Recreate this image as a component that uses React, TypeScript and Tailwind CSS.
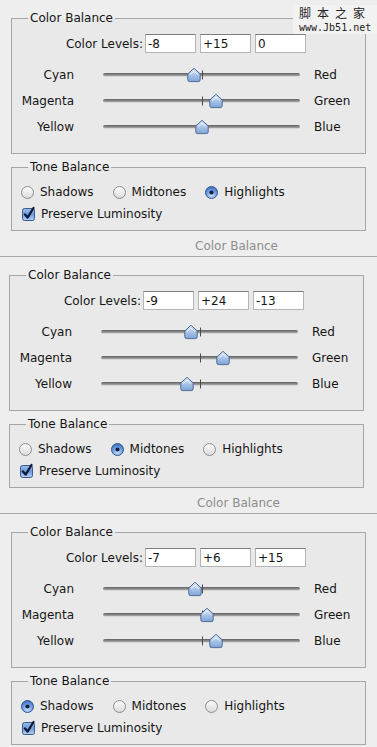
import React, { useId } from 'react';

type Tone = 'Shadows' | 'Midtones' | 'Highlights';

interface PanelProps {
  levels: [number, number, number];
  tone: Tone;
  shift?: boolean;
  footer?: boolean;
}

const fmt = (v: number) => (v > 0 ? `+${v}` : `${v}`);

const Thumb: React.FC<{ value: number }> = ({ value }) => {
  const id = useId();
  return (
    <svg
      width="14"
      height="15"
      viewBox="0 0 14 15"
      className="absolute top-1/2 -translate-y-1/2"
      style={{ left: `calc(${((value + 100) / 200) * 100}% - 7px)` }}
    >
      <defs>
        <linearGradient id={id} x1="0" y1="0" x2="0" y2="1">
          <stop offset="0" stopColor="#e4eefa" />
          <stop offset="0.5" stopColor="#a9c4e9" />
          <stop offset="1" stopColor="#7fa3d6" />
        </linearGradient>
      </defs>
      <path
        d="M7 0.8 L13.2 6.4 V12.2 Q13.2 14.2 11.2 14.2 H2.8 Q0.8 14.2 0.8 12.2 V6.4 Z"
        fill={`url(#${id})`}
        stroke="#4f6891"
        strokeWidth="1"
      />
      <path d="M3.2 7.2 L7 3.7 L10.8 7.2" fill="none" stroke="#ffffff" strokeOpacity="0.7" strokeWidth="1" />
    </svg>
  );
};

const Slider: React.FC<{ left: string; right: string; value: number }> = ({ left, right, value }) => (
  <div className="flex h-[26px] items-center">
    <span className="w-[62px] text-right">{left}</span>
    <div className="relative ml-[29px] flex h-[26px] w-[197px] items-center">
      <div className="h-[4px] w-full rounded-full border-b border-[#d6d6d6] bg-linear-to-b from-[#5f5f5f] to-[#a9a9a9]" />
      <div className="absolute left-1/2 top-1/2 h-[9px] w-px -translate-y-1/2 bg-[#4a4a4a]" />
      <Thumb value={value} />
    </div>
    <span className="ml-[14px]">{right}</span>
  </div>
);

const Radio: React.FC<{ on: boolean }> = ({ on }) => {
  const id = useId();
  return (
    <svg width="13" height="13" viewBox="0 0 13 13">
      <defs>
        {on ? (
          <radialGradient id={id} cx="0.5" cy="0.75" r="0.7">
            <stop offset="0" stopColor="#c9defa" />
            <stop offset="0.6" stopColor="#6f9be0" />
            <stop offset="1" stopColor="#3f6fbf" />
          </radialGradient>
        ) : (
          <linearGradient id={id} x1="0" y1="0" x2="0" y2="1">
            <stop offset="0" stopColor="#fdfdfd" />
            <stop offset="1" stopColor="#d9d9d9" />
          </linearGradient>
        )}
      </defs>
      <circle cx="6.5" cy="6.5" r="6" fill={`url(#${id})`} stroke={on ? '#34578f' : '#8c8c8c'} strokeWidth="1" />
      {on && <circle cx="6.5" cy="6.5" r="2.1" fill="#13213f" />}
    </svg>
  );
};

const Checkbox: React.FC = () => {
  const id = useId();
  return (
    <svg width="14" height="14" viewBox="0 0 14 14" className="overflow-visible">
      <defs>
        <linearGradient id={id} x1="0" y1="0" x2="0" y2="1">
          <stop offset="0" stopColor="#9cbcea" />
          <stop offset="0.5" stopColor="#6f9adc" />
          <stop offset="1" stopColor="#b7d0f2" />
        </linearGradient>
      </defs>
      <rect x="0.5" y="1.5" width="12" height="12" rx="2" fill={`url(#${id})`} stroke="#3b5a8d" />
      <path d="M3 7.5 L5.6 10.6 L11.5 1" fill="none" stroke="#0e1b3b" strokeWidth="2.3" strokeLinecap="round" strokeLinejoin="round" />
    </svg>
  );
};

const Panel: React.FC<PanelProps> = ({ levels, tone, shift = false, footer = false }) => {
  const ml = shift ? 'ml-[9px]' : 'ml-[11px]';
  const tones: Tone[] = ['Shadows', 'Midtones', 'Highlights'];
  return (
    <div className={footer ? 'flex h-[257px] flex-col' : 'flex flex-col'}>
      <fieldset className={`${ml} mt-[10px] w-[355px] border border-[#a6a6a6] bg-[#e9e9e9] pb-[13px]`}>
        <legend className="ml-[16px] px-[2px] leading-[16px]">Color Balance</legend>
        <div className="mt-[8px] flex items-center">
          <span className="w-[133px] pr-[2px] text-right">Color Levels:</span>
          <div className="flex gap-[4px]">
            {levels.map((v, i) => (
              <div
                key={i}
                className="flex h-[19px] w-[51px] items-center border border-[#b4b4b4] border-t-[#7d7d7d] bg-white pl-[2px]"
              >
                {fmt(v)}
              </div>
            ))}
          </div>
        </div>
        <div className="mt-[9px]">
          <Slider left="Cyan" right="Red" value={levels[0]} />
          <Slider left="Magenta" right="Green" value={levels[1]} />
          <Slider left="Yellow" right="Blue" value={levels[2]} />
        </div>
      </fieldset>

      <fieldset className={`${ml} mt-[5px] w-[355px] border border-[#a6a6a6] bg-[#e9e9e9] pb-[7px]`}>
        <legend className="ml-[16px] px-[2px] leading-[16px]">Tone Balance</legend>
        <div className="ml-[9px] mt-[8px] flex h-[18px] items-center gap-[19px]">
          {tones.map((t) => (
            <div key={t} className="flex items-center gap-[6px]">
              <Radio on={t === tone} />
              <span>{t}</span>
            </div>
          ))}
        </div>
        <div className="ml-[10px] mt-[4px] flex h-[18px] items-center gap-[5px]">
          <Checkbox />
          <span>Preserve Luminosity</span>
        </div>
      </fieldset>

      {footer && (
        <div className="mt-auto">
          <div className={`leading-[16px] text-[#8d8d8d] ${shift ? 'ml-[197px]' : 'ml-[195px]'}`}>Color Balance</div>
          <div className="mt-[2px] h-px bg-[#a9a9a9]" />
        </div>
      )}
    </div>
  );
};

export default function App() {
  return (
    <div className="relative h-[747px] w-[377px] overflow-hidden bg-[#eeeeee] font-['DejaVu_Sans',sans-serif] text-[12px] text-[#151515]">
      <div className="absolute left-[10px] top-[-12px] text-[13px] leading-[16px] text-[#c8c8c8]">Color Balance</div>

      <Panel levels={[-8, 15, 0]} tone="Highlights" footer />
      <Panel levels={[-9, 24, -13]} tone="Midtones" shift footer />
      <Panel levels={[-7, 6, 15]} tone="Shadows" />

      <div className="absolute left-[293px] top-[5px] flex h-[29px] w-[84px] flex-col items-start bg-[#f2f2f2] pl-[6px]">
        <span className="font-['Noto_Sans_CJK_SC',sans-serif] text-[12px] leading-[16px] tracking-[6px] text-[#222]">脚本之家</span>
        <span className="font-['DejaVu_Sans_Mono',monospace] text-[10px] leading-[13px] text-[#222]">www.Jb51.net</span>
      </div>
    </div>
  );
}
